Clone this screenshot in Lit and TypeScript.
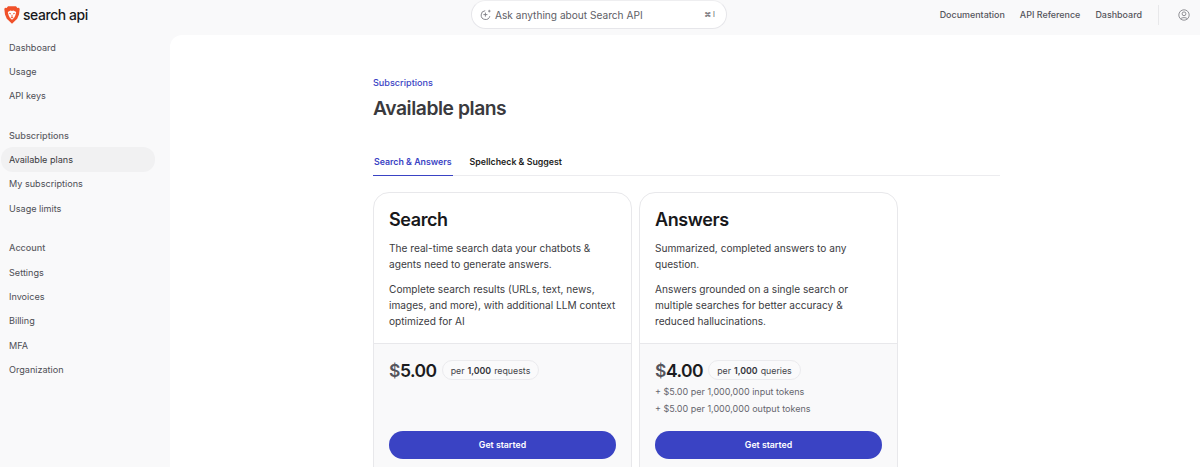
import { LitElement, html, css, svg } from "lit";
import { customElement } from "lit/decorators.js";

const groups = [
  { title: null, items: ["Dashboard", "Usage", "API keys"] },
  { title: "Subscriptions", items: ["Available plans", "My subscriptions", "Usage limits"] },
  { title: "Account", items: ["Settings", "Invoices", "Billing", "MFA", "Organization"] },
];

@customElement("app-root")
export class AppRoot extends LitElement {
  static styles = css`
    :host { display: block; height: 467px; overflow: hidden; background: #f9f9fa; font-family: Inter, "Liberation Sans", sans-serif; color: #3a3a40; }
    * { box-sizing: border-box; }
    header { height: 35px; display: flex; align-items: center; position: relative; }
    .brand { display: flex; align-items: center; gap: 3px; padding-left: 4px; width: 471px; margin-top: -6px; }
    .brand span { font-size: 13.9px; font-weight: 500; color: #17171a; letter-spacing: -0.4px; }
    .ask { width: 256px; height: 29px; margin-top: -6px; border: 1px solid #e6e6ea; border-top-color: #eeeef0; background: #fff; border-radius: 15px; display: flex; align-items: center; padding: 0 8px; font-size: 10.15px; color: #5e5e66; }
    .ask svg { margin-right: 3px; }
    .kbd { margin-left: auto; font-size: 7px; color: #55555c; padding-right: 3px; }
    .nav { margin-left: auto; display: flex; align-items: center; gap: 15px; font-size: 8.95px; color: #55555c; font-weight: 450; margin-top: -6px; padding-right: 10px; }
    .divider { width: 1px; height: 20px; background: #e8e8ea; margin-left: 1px; }
    .nav svg { margin-left: 4px; }
    .body { display: flex; height: 432px; }
    aside { width: 170px; flex: none; padding: 0 15px 0 1px; font-size: 9.1px; }
    .group { margin-bottom: 15.3px; }
    .item { height: 24.3px; display: flex; align-items: center; padding-left: 8px; border-radius: 12px; color: #4e4e55; }
    .item.active { background: #f1f1f2; color: #3a3a40; }
    .title { color: #5f5f66; font-weight: 500; }
    main { flex: 1; background: #fff; border-top-left-radius: 12px; padding: 42px 200px 0 203px; }
    .crumb { font-size: 9.1px; font-weight: 500; color: #3a43c4; line-height: 12px; }
    h1 { margin: 4px 0 0; font-size: 19.3px; line-height: 30px; font-weight: 600; color: #3a3a3e; letter-spacing: -0.45px; }
    .tabs { display: flex; gap: 16px; margin-top: 23px; border-bottom: 1px solid #ececef; font-size: 8.8px; font-weight: 600; color: #1e1e22; }
    .tab { height: 30px; display: flex; align-items: center; padding: 1px 1px 0; margin-bottom: -1px; border-bottom: 1px solid transparent; }
    .tab.active { color: #3a43c4; border-bottom-color: #3a43c4; }
    .cards { display: flex; gap: 7px; margin-top: 16px; width: 525px; }
    .card { flex: 1; height: 320px; border: 1px solid #e8e8eb; border-radius: 16px; overflow: hidden; display: flex; flex-direction: column; }
    .top { height: 151px; padding: 15px 15px 0; border-bottom: 1px solid #e8e8eb; }
    h2 { margin: 0; font-size: 18px; line-height: 24px; font-weight: 600; color: #18181b; letter-spacing: -0.4px; }
    .top p { margin: 0 0 10px; font-size: 10.15px; line-height: 15.7px; color: #3c3c42; }
    .top h2 + p { margin-top: 9px; }
    .bottom { flex: 1; background: #f9f9fa; padding: 14px 15px 0; }
    .price { display: flex; align-items: center; gap: 5px; height: 24px; }
    .amount { font-size: 17.5px; font-weight: 600; color: #1c1c20; letter-spacing: -0.5px; }
    .amount i { font-style: normal; color: #55555c; }
    .pill { height: 20px; border: 1px solid #ebebee; border-radius: 10px; padding: 0 8px; background: #fafafb; display: flex; align-items: center; font-size: 8.8px; color: #44444a; }
    .pill b { font-weight: 600; margin: 0 3px; color: #33333a; }
    .extras { height: 40px; padding-top: 2px; font-size: 9px; color: #66666e; line-height: 16.5px; }
    .btn { height: 28px; border-radius: 14px; background: #3a43c4; color: #fff; display: flex; align-items: center; justify-content: center; font-size: 8.75px; font-weight: 600; margin-top: 9px; }
  `;

  private logo() {
    return svg`<svg width="16" height="18" viewBox="0 0 16 18">
      <path d="M4 .3 L12 .3 L13.4 1.9 L15 1.7 L15.7 3 L15 8.5 L13.2 12.8 L8 17.7 L2.8 12.8 L1 8.5 L.3 3 L1 1.7 L2.6 1.9 Z" fill="#f0512a"/>
      <path d="M3.8 6 L6.6 4.4 L8 5 L9.4 4.4 L12.2 6 L11.4 9.3 L10 12 L8 13.8 L6 12 L4.6 9.3 Z" fill="#fff"/>
      <path d="M5.2 7.3 L7 7.9 M10.8 7.3 L9 7.9 M8 8.8 L8 11.6 M6.6 12 L8 11.4 L9.4 12" stroke="#f0512a" stroke-width=".9" fill="none"/>
    </svg>`;
  }

  private sparkle() {
    return svg`<svg width="12" height="12" viewBox="0 0 12 12" fill="none" stroke="#7a7a82" stroke-width="0.9">
      <path d="M9.8 7.2 A4.4 4.4 0 1 1 5.2 1.7"/>
      <path d="M5.4 3.6 V7.6 M3.4 5.6 H7.4"/>
      <path d="M9.3 0.8 V3.4 M8 2.1 H10.6" stroke-width="0.8"/>
    </svg>`;
  }

  private user() {
    return svg`<svg width="12" height="12" viewBox="0 0 12 12" fill="none" stroke="#77777e" stroke-width="0.8">
      <circle cx="6" cy="6" r="5.2"/><circle cx="6" cy="4.8" r="1.9"/>
      <path d="M2.6 9.8 C3.6 8.2 8.4 8.2 9.4 9.8"/>
    </svg>`;
  }

  private card(name: string, paras: string[], price: string, unit: string, extras: string[]) {
    return html`<div class="card">
      <div class="top">
        <h2>${name}</h2>
        ${paras.map((p) => html`<p>${p}</p>`)}
      </div>
      <div class="bottom">
        <div class="price">
          <span class="amount"><i>$</i>${price}</span>
          <span class="pill">per <b>1,000</b> ${unit}</span>
        </div>
        <div class="extras">${extras.map((e) => html`<div>${e}</div>`)}</div>
        <div class="btn">Get started</div>
      </div>
    </div>`;
  }

  render() {
    return html`
      <header>
        <div class="brand">${this.logo()}<span>search api</span></div>
        <div class="ask">${this.sparkle()}Ask anything about Search API<span class="kbd">⌘ I</span></div>
        <div class="nav">
          <span>Documentation</span><span>API Reference</span><span>Dashboard</span>
          <span class="divider"></span>${this.user()}
        </div>
      </header>
      <div class="body">
        <aside>
          ${groups.map((g) => html`<div class="group">
            ${g.title ? html`<div class="item title">${g.title}</div>` : ""}
            ${g.items.map((i) => html`<div class="item ${i === "Available plans" ? "active" : ""}">${i}</div>`)}
          </div>`)}
        </aside>
        <main>
          <div class="crumb">Subscriptions</div>
          <h1>Available plans</h1>
          <div class="tabs">
            <div class="tab active">Search &amp; Answers</div>
            <div class="tab">Spellcheck &amp; Suggest</div>
          </div>
          <div class="cards">
            ${this.card("Search", ["The real-time search data your chatbots & agents need to generate answers.", "Complete search results (URLs, text, news, images, and more), with additional LLM context optimized for AI"], "5.00", "requests", [])}
            ${this.card("Answers", ["Summarized, completed answers to any question.", "Answers grounded on a single search or multiple searches for better accuracy & reduced hallucinations."], "4.00", "queries", ["+ $5.00 per 1,000,000 input tokens", "+ $5.00 per 1,000,000 output tokens"])}
          </div>
        </main>
      </div>
    `;
  }
}
